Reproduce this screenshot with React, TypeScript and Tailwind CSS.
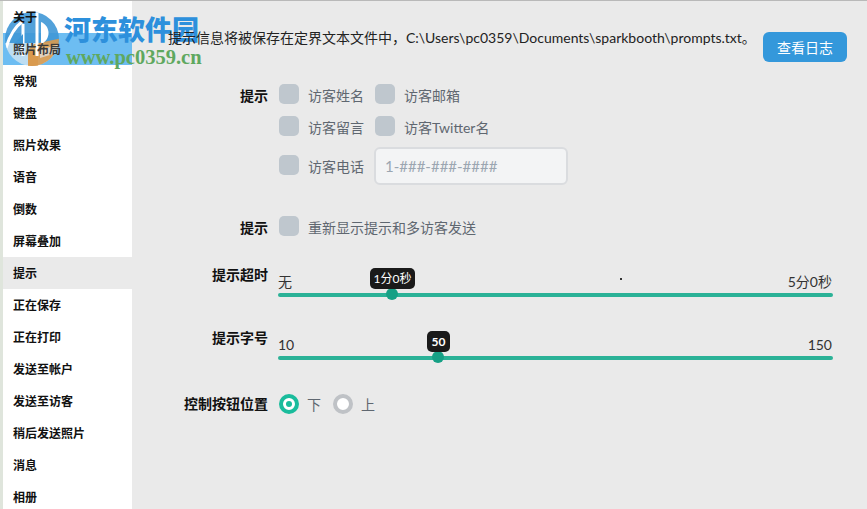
const nav = ['关于','照片布局','常规','键盘','照片效果','语音','倒数','屏幕叠加','提示','正在保存','正在打印','发送至帐户','发送至访客','稍后发送照片','消息','相册'];

function Box({ label, wide }: { label: string; wide?: boolean }) {
  return (
    <div className={`flex items-start ${wide ? 'w-[96px]' : ''}`}>
      <span className="w-5 h-5 rounded-[5px] bg-[#bfc7ce] shrink-0" />
      <span className="ml-[9px] mt-[2px] text-[14px] leading-5 text-[#5f6770] whitespace-nowrap">{label}</span>
    </div>
  );
}

function Label({ children, className = '' }: { children: string; className?: string }) {
  return <div className={`w-[136px] shrink-0 text-right text-[14px] leading-5 font-bold text-[#111] ${className}`}>{children}</div>;
}

function Slider({ min, max, tipClass, handleClass, tipText }: { min: string; max: string; tipClass: string; handleClass: string; tipText: string }) {
  return (
    <div className="relative w-[555px] ml-[10px] h-[34px]">
      <div className="flex justify-between items-end h-[27px] pr-[1px] text-[14px] leading-5 text-[#333]">
        <span>{min}</span>
        <span>{max}</span>
      </div>
      <div className="mt-[1px] h-1 rounded-full bg-[#2bb297]" />
      <span className={`absolute top-[23px] w-3 h-3 rounded-full bg-[#16a085] ${handleClass}`} />
      <span className={`absolute top-[3px] h-[21px] rounded-[5px] bg-[#1a1a1a] text-white text-[12px] leading-[21px] text-center ${tipClass}`}>{tipText}</span>
    </div>
  );
}

export default function App() {
  return (
    <div className="relative w-[867px] h-[509px] overflow-hidden bg-[#eaeaea] flex border-t border-[#b9b9b9]" style={{ fontFamily: '"Lato","Noto Sans CJK SC",sans-serif' }}>
      <div className="w-[3px] shrink-0 bg-[#dfe5dc]" />
      <nav className="w-[129px] shrink-0 bg-white">
        {nav.map((n, i) => (
          <div key={n} className={`h-8 pl-[10px] pt-[2px] flex items-center text-[12px] font-bold ${i === 1 ? 'bg-[#6dbdf2] text-[#3a3a3a]' : 'text-[#111]'} ${i === 8 ? 'bg-[#eaeaea]' : ''}`}>
            <span className="relative z-10">{n}</span>
          </div>
        ))}
      </nav>

      <main className="flex-1 min-w-0">
        <div className="flex items-start pl-[36px] pt-[31px] h-[83px]">
          <p className="relative z-10 w-[595px] text-[14px] leading-[14px] mt-[-1px] text-[#222] whitespace-nowrap">提示信息将被保存在定界文本文件中，C:\Users\pc0359\Documents\sparkbooth\prompts.txt。</p>
          <button className="w-[84px] h-[30px] rounded-[6px] bg-[#3498db] text-white text-[14px]">查看日志</button>
        </div>

        <div className="flex">
          <Label className="mt-[2px]">提示</Label>
          <div className="ml-[11px] flex flex-col">
            <div className="flex h-[32px]"><Box wide label="访客姓名" /><Box label="访客邮箱" /></div>
            <div className="flex h-[31px]"><Box wide label="访客留言" /><Box label="访客Twitter名" /></div>
            <div className="flex h-[38px] items-center">
              <div className="w-[95px]"><Box label="访客电话" /></div>
              <div className="w-[194px] h-[38px] rounded-[6px] border-2 border-[#dadcdf] bg-[#f3f4f5] pl-[9px] text-[15px] leading-[34px] text-[#9ba6b1]">1-###-###-####</div>
            </div>
          </div>
        </div>

        <div className="flex mt-[31px]">
          <Label className="mt-[2px]">提示</Label>
          <div className="ml-[11px]"><Box label="重新显示提示和多访客发送" /></div>
        </div>

        <div className="flex mt-[27px]">
          <Label>提示超时</Label>
          <Slider min="无" max="5分0秒" tipText="1分0秒" tipClass="left-[92px] w-[45px]" handleClass="left-[108px]" />
        </div>

        <div className="flex mt-[29px]">
          <Label>提示字号</Label>
          <Slider min="10" max="150" tipText="50" tipClass="left-[149px] w-[23px] font-bold" handleClass="left-[154px]" />
        </div>

        <div className="flex mt-[32px] items-center h-5">
          <Label>控制按钮位置</Label>
          <div className="ml-[11px] flex items-center">
            <span className="w-5 h-5 rounded-full border-[4px] border-[#1abc9c] bg-white shrink-0 flex items-center justify-center">
              <span className="w-[6px] h-[6px] rounded-full bg-[#1abc9c]" />
            </span>
            <span className="ml-2 text-[14px] text-[#5f6770]">下</span>
            <span className="ml-[12px] w-5 h-5 rounded-full border-[4px] border-[#bfc2c6] bg-white shrink-0" />
            <span className="ml-2 text-[14px] text-[#5f6770]">上</span>
          </div>
        </div>
      </main>

      <span className="absolute left-[620px] top-[277px] w-[2px] h-[2px] bg-[#333]" />

      {/* watermark */}
      <div className="absolute left-0 top-0 w-[210px] h-[72px] pointer-events-none">
        <svg className="absolute left-[4px] top-[9px]" width="58" height="58" viewBox="0 0 58 58">
          <defs>
            <clipPath id="disc"><circle cx="28" cy="29" r="27" /></clipPath>
          </defs>
          <g clipPath="url(#disc)">
            <rect x="0" y="0" width="58" height="33" fill="#3f97d6" fillOpacity="0.9" />
            <rect x="0" y="33" width="58" height="25" fill="#d8e8f2" fillOpacity="0.75" />
            <path d="M30 34 L58 28 L58 58 L24 58 L24 40 Z" fill="#d99a4e" fillOpacity="0.9" />
            <rect x="24" y="40" width="10" height="18" fill="#d99a4e" />
            <path d="M36 40 L56 34 L56 42 L36 48 Z" fill="#e6e6e6" fillOpacity="0.7" />
            <path d="M2 38 C6 24 12 16 19 11" stroke="#fff" strokeWidth="3" fill="none" />
            <path d="M19 14 L19 46" stroke="#fff" strokeWidth="3" fill="none" />
            <path d="M33 2 L33 46" stroke="#fff" strokeWidth="3" fill="none" />
            <path d="M37 12 C47 16 47 30 37 34 Z" fill="#fff" />
            <path d="M10 34 L19 24 L19 34 Z" fill="#3f97d6" />
          </g>
        </svg>
        <span className="absolute left-[64px] top-[11px] text-[27px] leading-[34px] font-black text-[#2d90dc] whitespace-nowrap" style={{ fontFamily: '"Noto Sans CJK SC",sans-serif' }}>河东软件园</span>
        <span className="absolute left-[66px] top-[46px] text-[20.5px] leading-5 font-bold text-[#5fa85f] whitespace-nowrap" style={{ fontFamily: '"Liberation Serif",serif' }}>www.pc0359.cn</span>
      </div>
    </div>
  );
}
